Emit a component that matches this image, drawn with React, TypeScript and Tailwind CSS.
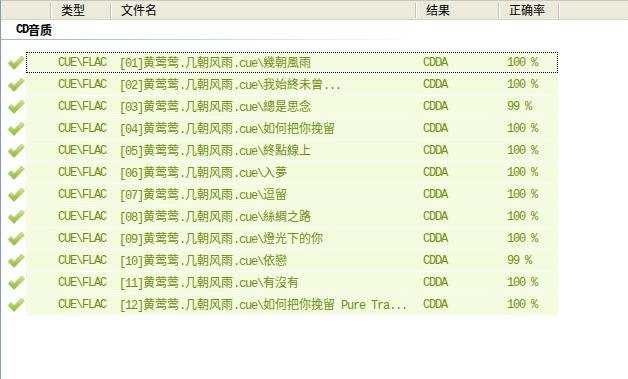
import React from 'react';

const rows = [
  { name: '[01]黄莺莺.几朝风雨.cue\\幾朝風雨', rate: '100 %' },
  { name: '[02]黄莺莺.几朝风雨.cue\\我始終未曾...', rate: '100 %' },
  { name: '[03]黄莺莺.几朝风雨.cue\\總是思念', rate: '99 %' },
  { name: '[04]黄莺莺.几朝风雨.cue\\如何把你挽留', rate: '100 %' },
  { name: '[05]黄莺莺.几朝风雨.cue\\終點線上', rate: '100 %' },
  { name: '[06]黄莺莺.几朝风雨.cue\\入夢', rate: '100 %' },
  { name: '[07]黄莺莺.几朝风雨.cue\\逗留', rate: '100 %' },
  { name: '[08]黄莺莺.几朝风雨.cue\\絲綢之路', rate: '100 %' },
  { name: '[09]黄莺莺.几朝风雨.cue\\燈光下的你', rate: '100 %' },
  { name: '[10]黄莺莺.几朝风雨.cue\\依戀', rate: '99 %' },
  { name: '[11]黄莺莺.几朝风雨.cue\\有沒有', rate: '100 %' },
  { name: '[12]黄莺莺.几朝风雨.cue\\如何把你挽留 Pure Tra...', rate: '100 %' },
];

// latin runs get squeezed to a 6px advance, like the bitmap font in the shot
function Mixed({ text }: { text: string }) {
  const parts = text.split(/([\x00-\x7f]+)/).filter(Boolean);
  return (
    <>
      {parts.map((p, i) =>
        /^[\x00-\x7f]+$/.test(p) ? (
          <span key={i} className="font-['Liberation_Mono',monospace] tracking-[-1.2px] whitespace-pre">
            {p}
          </span>
        ) : (
          <span key={i} className="font-['Noto_Sans_CJK_SC',sans-serif]">{p}</span>
        )
      )}
    </>
  );
}

function Check() {
  return (
    <svg width="18" height="16" viewBox="0 0 18 16">
      <defs>
        <linearGradient id="ck" x1="0" y1="0" x2="0" y2="1">
          <stop offset="0" stopColor="#cfe68a" />
          <stop offset="1" stopColor="#8cb836" />
        </linearGradient>
      </defs>
      <path d="M1 8.5 L4 5.5 L7 8.5 L14.5 1 L17.5 4 L7 14.5 Z" fill="url(#ck)" stroke="#9ec455" strokeWidth="0.6" />
    </svg>
  );
}

function HeadCell({ label, w }: { label?: string; w: string }) {
  return (
    <div className={`flex items-center h-full ${w}`}>
      <div className="h-[15px] w-[2px] border-l border-[#c7c5b2] border-r border-r-white" />
      <span className="pl-[9px] font-['Noto_Sans_CJK_SC',sans-serif] text-[12px] leading-none text-black">{label}</span>
    </div>
  );
}

export default function App() {
  return (
    <div className="w-[628px] h-[379px] bg-white border-l border-[#7f9db9] overflow-hidden text-[12px]">
      <div className="flex h-[20px] bg-[#ebeadb] border-t border-[#c9c7ba] border-b border-b-[#d8d4c4]">
        <div className="w-[49px]" />
        <HeadCell label="类型" w="w-[60px]" />
        <HeadCell label="文件名" w="w-[305px]" />
        <HeadCell label="结果" w="w-[83px]" />
        <HeadCell label="正确率" w="w-[60px]" />
        <HeadCell w="flex-1" />
      </div>

      <div className="h-[19px] flex items-center pl-[15px] font-bold text-black">
        <Mixed text="CD音质" />
      </div>
      <div className="h-px w-[420px] bg-gradient-to-r from-[#9db5cf] via-[#c9d7e6] to-white" />

      <div className="mt-[12px] flex flex-col gap-px">
        {rows.map((r, i) => (
          <div key={i} className="flex h-[21px]">
            <div className="w-[25px] flex items-center pl-[6px]">
              <Check />
            </div>
            <div
              className={`w-[532px] flex items-center bg-[#f4fcdf] text-[#6f8f10] border ${
                i === 0 ? 'border-dotted border-black' : 'border-transparent'
              }`}
            >
              <div className="w-[83px] pl-[31px]">
                <Mixed text="CUE\FLAC" />
              </div>
              <div className="w-[305px] pl-[9px] whitespace-nowrap overflow-hidden">
                <Mixed text={r.name} />
              </div>
              <div className="w-[83px] pl-[8px]">
                <Mixed text="CDDA" />
              </div>
              <div className="flex-1 pl-[9px]">
                <Mixed text={r.rate} />
              </div>
            </div>
          </div>
        ))}
      </div>
    </div>
  );
}
